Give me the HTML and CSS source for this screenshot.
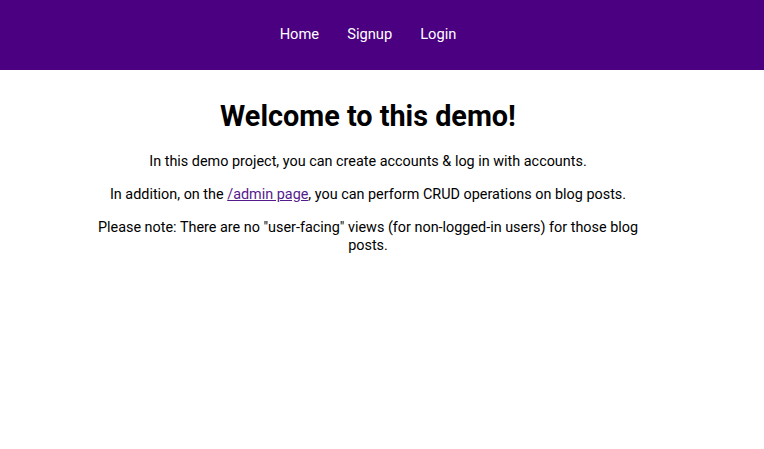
FILE: index.html
```html
<!DOCTYPE html>
<html lang="en">
<head>
<meta charset="utf-8">
<title>Demo</title>
<link rel="stylesheet" href="styles.css">
</head>
<body>
<header class="main-header">
  <nav>
    <ul class="nav-list">
      <li class="nav-item"><a href="#">Home</a></li>
      <li class="nav-item"><a href="#">Signup</a></li>
      <li class="nav-item"><a href="#">Login</a></li>
    </ul>
  </nav>
</header>
<div class="page">
  <main class="content">
    <h1 class="title">Welcome to this demo!</h1>
    <p>In this demo project, you can create accounts &amp; log in with accounts.</p>
    <p>In addition, on the <a class="admin-link" href="#">/admin page</a>, you can perform CRUD operations on blog posts.</p>
    <p>Please note: There are no "user-facing" views (for non-logged-in users) for those blog posts.</p>
  </main>
</div>
</body>
</html>
```
FILE: styles.css
```css
* { box-sizing: border-box; }
html, body { margin: 0; padding: 0; }
body {
  font-family: Roboto, "Liberation Sans", sans-serif;
  color: #000;
  background: #fff;
}
.main-header {
  background: #4b0082;
  height: 70px;
  padding-bottom: 3px;
  display: flex;
  align-items: center;
  justify-content: center;
}
.nav-list {
  list-style: none;
  margin: 0;
  padding: 0;
  display: flex;
}
.nav-item { margin-right: 28px; }
.nav-item a {
  color: #fff;
  text-decoration: none;
  font-size: 14.7px;
}
.page {
  padding-right: 28px;
}
.content {
  width: 560px;
  margin: 0 auto;
  text-align: center;
  padding-top: 1px;
}
.title {
  font-size: 28.8px;
  line-height: normal;
  font-weight: 700;
  margin: 28px 0 20px;
}
.content p {
  font-size: 14.4px;
  line-height: 18px;
  margin: 14.8px 0;
}
.admin-link { color: #551a8b; }
```
